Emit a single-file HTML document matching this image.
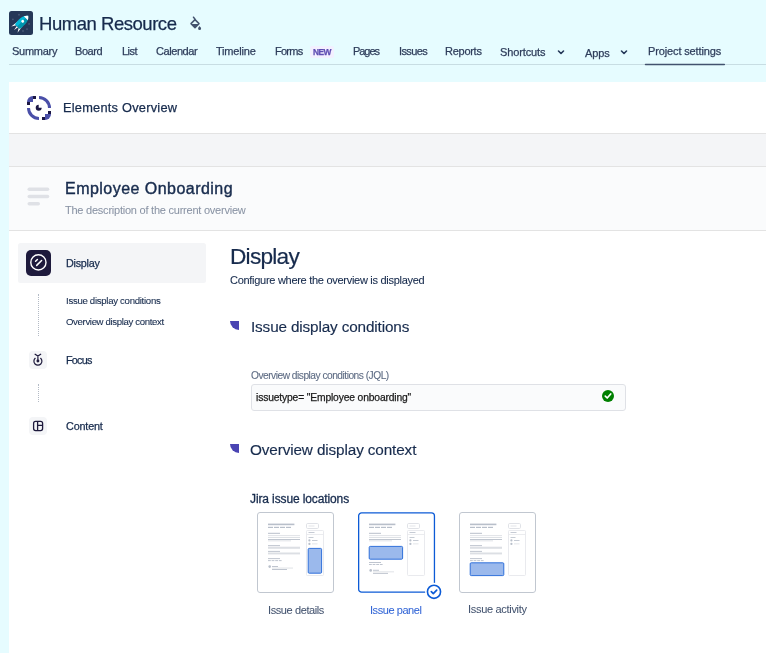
<!DOCTYPE html>
<html><head><meta charset="utf-8">
<style>
*{margin:0;padding:0;box-sizing:border-box}
html,body{width:766px;height:653px;overflow:hidden;background:#E6FCFF;-webkit-font-smoothing:antialiased;font-family:"Liberation Sans",sans-serif;color:#172B4D}
.a{position:absolute;white-space:nowrap;line-height:1;will-change:transform;-webkit-text-stroke:0.25px currentColor}
.nav{font-size:12px;color:#42526E}
</style></head><body>
<!-- project icon -->
<svg class="a" style="left:9px;top:11px" width="24" height="24" viewBox="0 0 24 24">
<rect width="24" height="24" rx="2.5" fill="#253858"/>
<g fill="#4A5A78"><circle cx="10" cy="3.7" r="0.9"/><circle cx="3.9" cy="8.3" r="0.9"/><circle cx="20.1" cy="12.9" r="0.9"/><circle cx="18" cy="18.1" r="0.9"/><circle cx="14" cy="20" r="0.9"/></g>
<g transform="rotate(45 12 12)">
<path d="M8.8 12.5 L7.6 21.3 L10.2 17 Z M15.2 12.5 L16.4 21.3 L13.8 17 Z M11.1 17 L12 21.8 L12.9 17 Z" fill="#fff"/>
<path d="M12 1.8 C16.2 5 16.4 10 15.4 17.2 L12 17.2 Z" fill="#0095AD"/>
<path d="M12 1.8 C7.8 5 7.6 10 8.6 17.2 L12 17.2 Z" fill="#00B8D9"/>
<path d="M12 1.8 C13.5 3 14.3 4 14.8 5.2 L9.2 5.2 C9.7 4 10.5 3 12 1.8 Z" fill="#fff"/>
<circle cx="12" cy="9.6" r="1.45" fill="#fff"/>
</g>
</svg>
<svg class="a" style="left:188px;top:15px" width="14" height="16" viewBox="0 0 14 16">
<path d="M5.5 2.2 L7 4.1" stroke="#42526E" stroke-width="1.5" stroke-linecap="round"/>
<path d="M3 8.6 L7 4.6 L11 8.6 L7 12.6 Z" fill="none" stroke="#42526E" stroke-width="1.5" stroke-linejoin="round"/>
<path d="M3.2 9 L10.8 9 L7 12.6 Z" fill="#42526E"/>
<path d="M11.6 11.1 C12.2 12 13.1 12.6 13.1 13.4 A1.5 1.5 0 0 1 10.1 13.4 C10.1 12.6 11 12 11.6 11.1 Z" fill="#42526E"/>
</svg>
<!-- nav -->
<div class="a" style="left:310px;top:46px;width:24px;height:12px;background:#F3F0FF;border-radius:2px"></div>
<svg class="a" style="left:557px;top:49px" width="8" height="7" viewBox="0 0 8 7"><path d="M1.5 2 L4 4.5 L6.5 2" fill="none" stroke="#253858" stroke-width="1.6" stroke-linecap="round" stroke-linejoin="round"/></svg>
<svg class="a" style="left:620px;top:49px" width="8" height="7" viewBox="0 0 8 7"><path d="M1.5 2 L4 4.5 L6.5 2" fill="none" stroke="#253858" stroke-width="1.6" stroke-linecap="round" stroke-linejoin="round"/></svg>
<div class="a" style="left:9px;top:64px;width:757px;height:1px;background:#C8DDE3"></div>
<svg class="a" style="left:644px;top:60px" width="82" height="8" viewBox="0 0 82 8"><path d="M1.5 4.4 H80.3" stroke="#42526E" stroke-width="1.5" stroke-linecap="round"/></svg>

<!-- panels -->
<div class="a" style="left:9px;top:82px;width:757px;height:571px;background:#fff"></div>
<div class="a" style="left:9px;top:133px;width:757px;height:34px;background:#F4F5F7;border-top:1px solid #E3E3E3;border-bottom:1px solid #E3E3E3"></div>
<div class="a" style="left:9px;top:167px;width:757px;height:64px;background:#FAFBFC;border-bottom:1px solid #E3E3E3"></div>

<!-- elements overview -->
<svg class="a" style="left:27px;top:96px" width="24" height="24" viewBox="0 0 24 24">
<g fill="#4A4FA8">
<path d="M0 6 A6 6 0 0 1 6 0 V6 Z"/>
<path d="M24 18 A6 6 0 0 1 18 24 V18 Z"/>
<path d="M12 0 A12 12 0 0 1 24 12 H21 A9 9 0 0 0 12 3 Z"/>
<path d="M0 12 A12 12 0 0 0 12 24 V21 A9 9 0 0 1 3 12 Z"/>
</g>
<g fill="#1B1744">
<rect x="6" y="0" width="3" height="3"/><rect x="0" y="6" width="3" height="3"/>
<rect x="21" y="15" width="3" height="3"/><rect x="15" y="21" width="3" height="3"/>
<path d="M11.7 8.7 A3 3 0 1 0 14.7 11.7 L11.7 11.7 Z"/>
</g>
</svg>

<!-- employee onboarding -->
<svg class="a" style="left:27px;top:187px" width="23" height="20" viewBox="0 0 23 20">
<g stroke="#DFE1E6" stroke-width="3.6" stroke-linecap="round">
<path d="M2.3 2.3 H20.5"/><path d="M2.3 9.5 H20.5"/><path d="M2.3 16.8 H11.2"/>
</g></svg>

<!-- left nav -->
<div class="a" style="left:18px;top:243px;width:188px;height:40px;background:#F4F5F7;border-radius:2.5px"></div>
<svg class="a" style="left:26px;top:250px" width="25" height="26" viewBox="0 0 25 26">
<rect width="25" height="26" rx="5" fill="#1E1A3C"/>
<circle cx="12.4" cy="12.4" r="7.6" fill="none" stroke="#fff" stroke-width="1.4"/>
<path d="M9.6 11.2 L11.4 9.5 M10.7 15.4 L15.6 10.5" stroke="#fff" stroke-width="1.5" stroke-linecap="round"/>
</svg>
<div class="a" style="left:38px;top:294px;width:1px;height:42px;border-left:1px dotted #B3BAC5"></div>

<div class="a" style="left:29px;top:351px;width:18px;height:18px;background:#F4F5F7;border-radius:4px"></div>
<svg class="a" style="left:29px;top:351px" width="18" height="18" viewBox="0 0 18 18">
<g fill="none" stroke="#1E1A3C" stroke-width="1.2" stroke-linecap="round">
<path d="M6.1 3.2 L8.9 5 L11.7 3.2 M8.9 5 V10"/>
<path d="M6.15 7.3 A4 4 0 1 0 11.65 7.3"/>
</g><circle cx="8.9" cy="10" r="1.45" fill="#1E1A3C"/>
</svg>
<div class="a" style="left:38px;top:384px;width:1px;height:18px;border-left:1px dotted #B3BAC5"></div>
<div class="a" style="left:29px;top:417px;width:18px;height:18px;background:#F4F5F7;border-radius:4px"></div>
<svg class="a" style="left:29px;top:417px" width="18" height="18" viewBox="0 0 18 18">
<g fill="none" stroke="#1E1A3C" stroke-width="1.3">
<rect x="4.6" y="4.4" width="9" height="9.2" rx="2"/>
<path d="M8.6 4.4 V13.6 M8.6 8.4 H13.6"/>
</g></svg>

<!-- main -->

<div class="a" style="left:230px;top:321px;width:9px;height:9px;background:#4A44B3;border-bottom-left-radius:9px"></div>

<div class="a" style="left:251px;top:384px;width:375px;height:27px;background:#FAFBFC;border:1px solid #DFE1E6;border-radius:3px"></div>
<svg class="a" style="left:602px;top:390px" width="12" height="12" viewBox="0 0 12 12">
<circle cx="6" cy="6" r="6" fill="#008000"/>
<path d="M3.3 6.2 L5.2 8 L8.7 4" fill="none" stroke="#fff" stroke-width="1.7" stroke-linecap="round" stroke-linejoin="round"/>
</svg>

<div class="a" style="left:230px;top:444px;width:9px;height:9px;background:#4A44B3;border-bottom-left-radius:9px"></div>


<!-- cards -->
<div class="a" style="left:257px;top:512px;width:77px;height:81px;border:1px solid #C1C7D0;border-radius:3px"></div>
<svg class="a" style="left:357px;top:511px" width="80" height="83" viewBox="0 0 80 83"><rect x="1.65" y="1.85" width="75.8" height="79.3" rx="3" fill="none" stroke="#0C5BD6" stroke-width="1.3"/></svg>
<div class="a" style="left:459px;top:512px;width:77px;height:81px;border:1px solid #C1C7D0;border-radius:3px"></div>
<svg class="a" style="left:257px;top:512px" width="77" height="81" viewBox="0 0 77 81">
<rect x="11" y="11.6" width="26.4" height="1.6" fill="#B8BFCA" rx="0"/>
<rect x="11" y="14.8" width="5" height="1.2" fill="#B8BFCA" rx="0"/>
<rect x="17" y="14.8" width="5" height="1.2" fill="#B8BFCA" rx="0"/>
<rect x="23" y="14.8" width="5" height="1.2" fill="#B8BFCA" rx="0"/>
<rect x="29" y="14.8" width="5" height="1.2" fill="#B8BFCA" rx="0"/>
<rect x="11" y="20.8" width="12" height="1" fill="#B8BFCA" rx="0"/>
<rect x="11" y="23.2" width="32" height="0.9" fill="#DCDFE4" rx="0"/>
<rect x="11" y="25.1" width="32" height="0.9" fill="#DCDFE4" rx="0"/>
<rect x="11" y="27.0" width="32" height="0.9" fill="#B8BFCA" rx="0"/>
<rect x="11" y="28.4" width="23" height="0.9" fill="#DCDFE4" rx="0"/>
<rect x="49.5" y="11.5" width="12" height="5" rx="1.2" fill="#fff" stroke="#DCDFE4" stroke-width="0.9"/>
<rect x="51.5" y="13.6" width="6" height="0.8" fill="#DCDFE4" rx="0"/>
<rect x="49.5" y="18.5" width="17" height="45" rx="0.8" fill="#fff" stroke="#E6E8EC" stroke-width="0.9"/>
<rect x="49.5" y="22.2" width="17" height="0.8" fill="#E6E8EC" rx="0"/>
<rect x="51.5" y="20.2" width="6" height="0.8" fill="#B8BFCA" rx="0"/>
<rect x="51.5" y="25.1" width="5" height="0.8" fill="#B8BFCA" rx="0"/>
<circle cx="52.4" cy="28.4" r="1.1" fill="#B8BFCA"/>
<rect x="55" y="28" width="5.5" height="0.8" fill="#B8BFCA" rx="0"/>
<circle cx="52.4" cy="31.9" r="1.1" fill="#B8BFCA"/>
<rect x="55" y="31.5" width="5.5" height="0.8" fill="#DCDFE4" rx="0"/>
<rect x="11" y="33.2" width="12" height="0.9" fill="#B8BFCA" rx="0"/>
<rect x="11" y="34.7" width="32" height="2.1" fill="#DCDFE4" rx="0"/>
<rect x="11" y="38.9" width="12" height="0.9" fill="#B8BFCA" rx="0"/>
<rect x="11" y="40.5" width="32" height="1.9" fill="#DCDFE4" rx="0"/>
<rect x="11" y="46.2" width="12" height="0.9" fill="#B8BFCA" rx="0"/>
<rect x="11.0" y="48.2" width="2.8" height="0.9" fill="#B8BFCA" rx="0"/>
<rect x="14.6" y="48.2" width="2.8" height="0.9" fill="#B8BFCA" rx="0"/>
<rect x="18.2" y="48.2" width="2.8" height="0.9" fill="#B8BFCA" rx="0"/>
<rect x="21.8" y="48.2" width="2.8" height="0.9" fill="#B8BFCA" rx="0"/>
<circle cx="12.7" cy="54.6" r="1.3" fill="#B8BFCA"/>
<rect x="15" y="54.0" width="6" height="0.9" fill="#B8BFCA" rx="0"/>
<rect x="15" y="55.6" width="21" height="0.9" fill="#DCDFE4" rx="0"/>
<rect x="15" y="57.1" width="15" height="0.9" fill="#B8BFCA" rx="0"/>
<rect x="51.2" y="36.4" width="13.4" height="24.8" rx="1" fill="#9BB9EC" stroke="#1F65D8" stroke-width="0.9"/>
</svg>
<svg class="a" style="left:358px;top:512px" width="77" height="81" viewBox="0 0 77 81">
<rect x="11" y="11.6" width="26.4" height="1.6" fill="#B8BFCA" rx="0"/>
<rect x="11" y="14.8" width="5" height="1.2" fill="#B8BFCA" rx="0"/>
<rect x="17" y="14.8" width="5" height="1.2" fill="#B8BFCA" rx="0"/>
<rect x="23" y="14.8" width="5" height="1.2" fill="#B8BFCA" rx="0"/>
<rect x="29" y="14.8" width="5" height="1.2" fill="#B8BFCA" rx="0"/>
<rect x="11" y="20.8" width="12" height="1" fill="#B8BFCA" rx="0"/>
<rect x="11" y="23.2" width="32" height="0.9" fill="#DCDFE4" rx="0"/>
<rect x="11" y="25.1" width="32" height="0.9" fill="#DCDFE4" rx="0"/>
<rect x="11" y="27.0" width="32" height="0.9" fill="#B8BFCA" rx="0"/>
<rect x="11" y="28.4" width="23" height="0.9" fill="#DCDFE4" rx="0"/>
<rect x="49.5" y="11.5" width="12" height="5" rx="1.2" fill="#fff" stroke="#DCDFE4" stroke-width="0.9"/>
<rect x="51.5" y="13.6" width="6" height="0.8" fill="#DCDFE4" rx="0"/>
<rect x="49.5" y="18.5" width="17" height="45" rx="0.8" fill="#fff" stroke="#E6E8EC" stroke-width="0.9"/>
<rect x="49.5" y="22.2" width="17" height="0.8" fill="#E6E8EC" rx="0"/>
<rect x="51.5" y="20.2" width="6" height="0.8" fill="#B8BFCA" rx="0"/>
<rect x="51.5" y="25.1" width="5" height="0.8" fill="#B8BFCA" rx="0"/>
<circle cx="52.4" cy="28.4" r="1.1" fill="#B8BFCA"/>
<rect x="55" y="28" width="5.5" height="0.8" fill="#B8BFCA" rx="0"/>
<circle cx="52.4" cy="31.9" r="1.1" fill="#B8BFCA"/>
<rect x="55" y="31.5" width="5.5" height="0.8" fill="#DCDFE4" rx="0"/>
<rect x="11.2" y="34.4" width="33.4" height="12.8" rx="1" fill="#9BB9EC" stroke="#1F65D8" stroke-width="0.9"/>
<rect x="11" y="50" width="12" height="0.9" fill="#B8BFCA" rx="0"/>
<rect x="11.0" y="52" width="2.8" height="0.9" fill="#B8BFCA" rx="0"/>
<rect x="14.6" y="52" width="2.8" height="0.9" fill="#B8BFCA" rx="0"/>
<rect x="18.2" y="52" width="2.8" height="0.9" fill="#B8BFCA" rx="0"/>
<rect x="21.8" y="52" width="2.8" height="0.9" fill="#B8BFCA" rx="0"/>
<circle cx="12.7" cy="58.4" r="1.3" fill="#B8BFCA"/>
<rect x="15" y="57.8" width="6" height="0.9" fill="#B8BFCA" rx="0"/>
<rect x="15" y="59.4" width="21" height="0.9" fill="#DCDFE4" rx="0"/>
<rect x="15" y="60.9" width="15" height="0.9" fill="#B8BFCA" rx="0"/>
</svg>
<svg class="a" style="left:459px;top:512px" width="77" height="81" viewBox="0 0 77 81">
<rect x="11" y="11.6" width="26.4" height="1.6" fill="#B8BFCA" rx="0"/>
<rect x="11" y="14.8" width="5" height="1.2" fill="#B8BFCA" rx="0"/>
<rect x="17" y="14.8" width="5" height="1.2" fill="#B8BFCA" rx="0"/>
<rect x="23" y="14.8" width="5" height="1.2" fill="#B8BFCA" rx="0"/>
<rect x="29" y="14.8" width="5" height="1.2" fill="#B8BFCA" rx="0"/>
<rect x="11" y="20.8" width="12" height="1" fill="#B8BFCA" rx="0"/>
<rect x="11" y="23.2" width="32" height="0.9" fill="#DCDFE4" rx="0"/>
<rect x="11" y="25.1" width="32" height="0.9" fill="#DCDFE4" rx="0"/>
<rect x="11" y="27.0" width="32" height="0.9" fill="#B8BFCA" rx="0"/>
<rect x="11" y="28.4" width="23" height="0.9" fill="#DCDFE4" rx="0"/>
<rect x="49.5" y="11.5" width="12" height="5" rx="1.2" fill="#fff" stroke="#DCDFE4" stroke-width="0.9"/>
<rect x="51.5" y="13.6" width="6" height="0.8" fill="#DCDFE4" rx="0"/>
<rect x="49.5" y="18.5" width="17" height="45" rx="0.8" fill="#fff" stroke="#E6E8EC" stroke-width="0.9"/>
<rect x="49.5" y="22.2" width="17" height="0.8" fill="#E6E8EC" rx="0"/>
<rect x="51.5" y="20.2" width="6" height="0.8" fill="#B8BFCA" rx="0"/>
<rect x="51.5" y="25.1" width="5" height="0.8" fill="#B8BFCA" rx="0"/>
<circle cx="52.4" cy="28.4" r="1.1" fill="#B8BFCA"/>
<rect x="55" y="28" width="5.5" height="0.8" fill="#B8BFCA" rx="0"/>
<circle cx="52.4" cy="31.9" r="1.1" fill="#B8BFCA"/>
<rect x="55" y="31.5" width="5.5" height="0.8" fill="#DCDFE4" rx="0"/>
<rect x="11" y="33.2" width="12" height="0.9" fill="#B8BFCA" rx="0"/>
<rect x="11" y="34.7" width="32" height="2.1" fill="#DCDFE4" rx="0"/>
<rect x="11" y="38.9" width="12" height="0.9" fill="#B8BFCA" rx="0"/>
<rect x="11" y="40.5" width="32" height="1.9" fill="#DCDFE4" rx="0"/>
<rect x="11" y="46.2" width="12" height="0.9" fill="#B8BFCA" rx="0"/>
<rect x="11.0" y="48.2" width="2.8" height="0.9" fill="#B8BFCA" rx="0"/>
<rect x="14.6" y="48.2" width="2.8" height="0.9" fill="#B8BFCA" rx="0"/>
<rect x="18.2" y="48.2" width="2.8" height="0.9" fill="#B8BFCA" rx="0"/>
<rect x="21.8" y="48.2" width="2.8" height="0.9" fill="#B8BFCA" rx="0"/>
<rect x="11.2" y="50.8" width="33.6" height="12.8" rx="1" fill="#9BB9EC" stroke="#1F65D8" stroke-width="0.9"/>
</svg>

<svg class="a" style="left:424px;top:582px" width="20" height="20" viewBox="0 0 20 20">
<circle cx="10" cy="9.8" r="9" fill="#fff"/>
<circle cx="10" cy="9.8" r="6.55" fill="#fff" stroke="#0C5BD6" stroke-width="1.6"/>
<path d="M7.3 9.6 L9.3 11.6 L12.7 8.2" fill="none" stroke="#0C5BD6" stroke-width="1.7" stroke-linecap="round" stroke-linejoin="round"/>
</svg>
<div id="t_hr" class="a" style="left:39.40px;top:14.54px;font-size:18.5px;color:#172B4D;letter-spacing:-0.462px;">Human Resource</div>
<div id="n1" class="a" style="left:12.00px;top:45.69px;font-size:11px;color:#2E3D5B;letter-spacing:-0.267px;">Summary</div>
<div id="n2" class="a" style="left:75.40px;top:45.69px;font-size:11px;color:#2E3D5B;letter-spacing:-0.450px;">Board</div>
<div id="n3" class="a" style="left:121.70px;top:45.69px;font-size:11px;color:#2E3D5B;letter-spacing:-0.533px;">List</div>
<div id="n4" class="a" style="left:155.70px;top:45.69px;font-size:11px;color:#2E3D5B;letter-spacing:-0.429px;">Calendar</div>
<div id="n5" class="a" style="left:215.90px;top:45.69px;font-size:11px;color:#2E3D5B;letter-spacing:-0.200px;">Timeline</div>
<div id="n6" class="a" style="left:275.40px;top:45.69px;font-size:11px;color:#2E3D5B;letter-spacing:-0.750px;">Forms</div>
<div id="n7" class="a" style="left:313.00px;top:47.89px;font-size:8.4px;color:#5E4DB2;letter-spacing:-0.550px;font-weight:bold">NEW</div>
<div id="n8" class="a" style="left:353.20px;top:45.69px;font-size:11px;color:#2E3D5B;letter-spacing:-1.050px;">Pages</div>
<div id="n9" class="a" style="left:398.80px;top:45.69px;font-size:11px;color:#2E3D5B;letter-spacing:-0.600px;">Issues</div>
<div id="n10" class="a" style="left:445.30px;top:45.69px;font-size:11px;color:#2E3D5B;letter-spacing:-0.267px;">Reports</div>
<div id="n11" class="a" style="left:500.10px;top:47.09px;font-size:11px;color:#2E3D5B;letter-spacing:-0.125px;">Shortcuts</div>
<div id="n12" class="a" style="left:584.50px;top:47.69px;font-size:11px;color:#2E3D5B;letter-spacing:-0.133px;">Apps</div>
<div id="n13" class="a" style="left:647.70px;top:45.89px;font-size:11px;color:#2E3D5B;letter-spacing:-0.133px;">Project settings</div>
<div id="eo" class="a" style="left:63.00px;top:102.06px;font-size:12.8px;color:#172B4D;letter-spacing:0.238px;">Elements Overview</div>
<div id="eob" class="a" style="left:64.70px;top:181.36px;font-size:16px;color:#172B4D;letter-spacing:0.467px;-webkit-text-stroke:0.4px #172B4D">Employee Onboarding</div>
<div id="desc" class="a" style="left:64.70px;top:204.69px;font-size:11px;color:#8993A4;letter-spacing:-0.232px;-webkit-text-stroke:0.05px #8993A4">The description of the current overview</div>
<div id="ln1" class="a" style="left:66.10px;top:257.56px;font-size:10.8px;color:#172B4D;letter-spacing:-0.267px;">Display</div>
<div id="ln2" class="a" style="left:65.60px;top:296.07px;font-size:9.6px;color:#172B4D;letter-spacing:-0.287px;-webkit-text-stroke:0.1px #172B4D">Issue display conditions</div>
<div id="ln3" class="a" style="left:65.70px;top:316.87px;font-size:9.6px;color:#172B4D;letter-spacing:-0.348px;-webkit-text-stroke:0.1px #172B4D">Overview display context</div>
<div id="ln4" class="a" style="left:66.40px;top:355.06px;font-size:10.8px;color:#172B4D;letter-spacing:-0.750px;">Focus</div>
<div id="ln5" class="a" style="left:66.20px;top:420.76px;font-size:10.8px;color:#172B4D;letter-spacing:-0.167px;">Content</div>
<div id="h1" class="a" style="left:230.20px;top:244.88px;font-size:22.7px;color:#172B4D;letter-spacing:-0.767px;-webkit-text-stroke:0.2px #172B4D">Display</div>
<div id="sub" class="a" style="left:229.60px;top:274.59px;font-size:11px;color:#172B4D;letter-spacing:-0.285px;-webkit-text-stroke:0.1px #172B4D">Configure where the overview is displayed</div>
<div id="h2a" class="a" style="left:250.80px;top:318.65px;font-size:15.3px;color:#172B4D;letter-spacing:-0.139px;-webkit-text-stroke:0.15px #172B4D">Issue display conditions</div>
<div id="lbl" class="a" style="left:250.70px;top:370.97px;font-size:10.2px;color:#5E6C84;letter-spacing:-0.494px;-webkit-text-stroke:0.1px #5E6C84">Overview display conditions (JQL)</div>
<div id="inp" class="a" style="left:255.90px;top:392.58px;font-size:10.3px;color:#1a1a1a;letter-spacing:-0.148px;">issuetype= "Employee onboarding"</div>
<div id="h2b" class="a" style="left:250.30px;top:441.85px;font-size:15.3px;color:#172B4D;letter-spacing:-0.122px;-webkit-text-stroke:0.15px #172B4D">Overview display context</div>
<div id="jil" class="a" style="left:250.30px;top:492.74px;font-size:12px;color:#172B4D;letter-spacing:-0.116px;-webkit-text-stroke:0.3px #172B4D">Jira issue locations</div>
<div id="c1" class="a" style="left:267.50px;top:604.79px;font-size:11px;color:#44546F;letter-spacing:-0.400px;-webkit-text-stroke:0.05px #44546F">Issue details</div>
<div id="c2" class="a" style="left:370.30px;top:604.79px;font-size:11px;color:#3366D6;letter-spacing:-0.440px;-webkit-text-stroke:0.05px #3366D6">Issue panel</div>
<div id="c3" class="a" style="left:467.60px;top:604.49px;font-size:11px;color:#44546F;letter-spacing:-0.308px;-webkit-text-stroke:0.05px #44546F">Issue activity</div>
</body></html>
